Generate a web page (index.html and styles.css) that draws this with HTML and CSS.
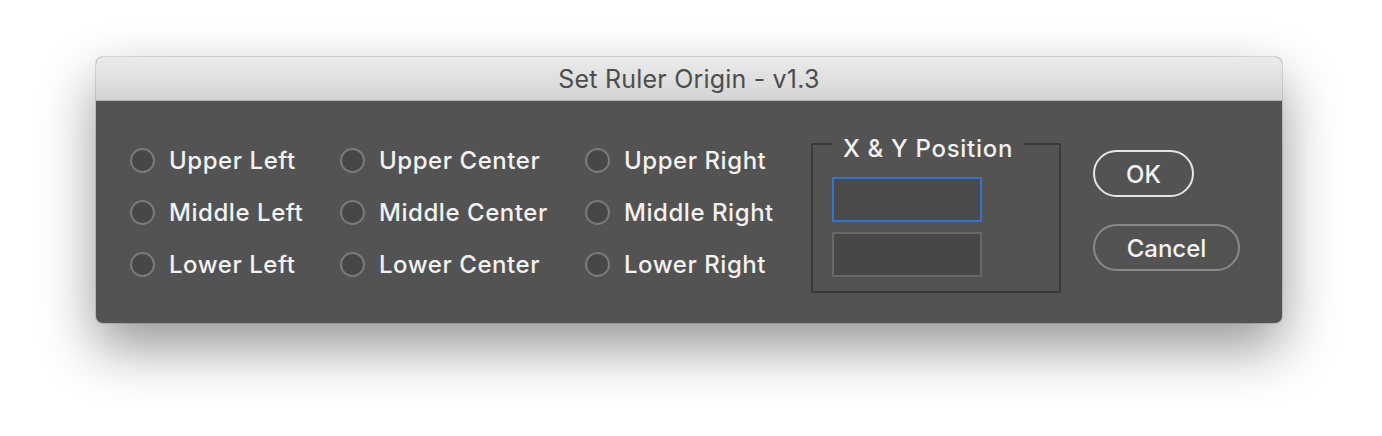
FILE: index.html
```html
<!DOCTYPE html>
<html>
<head>
<meta charset="utf-8">
<link rel="stylesheet" href="styles.css">
</head>
<body>
<div class="window">
  <div class="titlebar">Set Ruler Origin - v1.3</div>
  <div class="content">
    <div class="radios">
      <label class="radio"><span class="dot"></span>Upper Left</label>
      <label class="radio"><span class="dot"></span>Upper Center</label>
      <label class="radio"><span class="dot"></span>Upper Right</label>
      <label class="radio"><span class="dot"></span>Middle Left</label>
      <label class="radio"><span class="dot"></span>Middle Center</label>
      <label class="radio"><span class="dot"></span>Middle Right</label>
      <label class="radio"><span class="dot"></span>Lower Left</label>
      <label class="radio"><span class="dot"></span>Lower Center</label>
      <label class="radio"><span class="dot"></span>Lower Right</label>
    </div>
    <fieldset class="group">
      <legend class="group-title">X &amp; Y Position</legend>
      <div class="field focused"></div>
      <div class="field"></div>
    </fieldset>
    <div class="buttons">
      <div class="btn ok">OK</div>
      <div class="btn cancel">Cancel</div>
    </div>
  </div>
</div>
</body>
</html>
```

FILE: styles.css
```css
html, body {
  margin: 0;
  padding: 0;
  background: #ffffff;
}
body {
  width: 1382px;
  height: 436px;
  overflow: hidden;
  font-family: Inter, "Liberation Sans", sans-serif;
}
.window {
  margin: 57px 0 0 96px;
  width: 1186px;
  height: 266px;
  border-radius: 7px;
  overflow: hidden;
  background: #535353;
  box-shadow: 0 0 0 1px rgba(0,0,0,0.12), 0 24px 55px rgba(0,0,0,0.42);
  display: flex;
  flex-direction: column;
}
.titlebar {
  height: 43px;
  flex: none;
  background: linear-gradient(#ebebeb, #d5d5d5);
  border-bottom: 1px solid #b4b4b4;
  color: #4d4d4d;
  font-size: 25px;
  line-height: 45px;
  text-align: center;
  letter-spacing: 0.2px;
}
.content {
  flex: 1;
  display: flex;
  align-items: flex-start;
  padding: 33px 0 0 34px;
  color: #f2f2f2;
}
.radios {
  display: grid;
  grid-template-columns: 210px 245px 226px;
  grid-auto-rows: 52px;
}
.radio {
  display: flex;
  align-items: center;
  font-size: 24px;
  font-weight: 500;
  letter-spacing: 0.55px;
}
.dot {
  width: 21px;
  height: 21px;
  border: 2px solid #7a7a7a;
  border-radius: 50%;
  background: #474747;
  margin-right: 14px;
  flex: none;
}
.group {
  margin: -8px 0 0 0;
  width: 250px;
  height: 167px;
  box-sizing: border-box;
  border: 2px solid #3a3a3a;
  padding: 0 0 0 19px;
  min-inline-size: 0;
}
.group-title {
  margin-left: 0;
  padding: 10px 11px 0;
  font-size: 24px;
  font-weight: 500;
  line-height: 26px;
  letter-spacing: 0.7px;
  color: #f2f2f2;
}
.field {
  width: 150px;
  height: 45px;
  box-sizing: border-box;
  border: 2px solid #686868;
  background: #474747;
  margin-top: 10px;
}
.field.focused {
  border-color: #2f74d0;
  background: #4a4a4a;
  margin-top: 15px;
}
.buttons {
  margin-left: 32px;
  margin-top: 16px;
  display: flex;
  flex-direction: column;
  gap: 27px;
}
.btn {
  height: 47px;
  box-sizing: border-box;
  border-radius: 24px;
  font-size: 24px;
  font-weight: 500;
  line-height: 45px;
  text-align: center;
  color: #f2f2f2;
}
.ok {
  width: 101px;
  border: 2px solid #e6e6e6;
}
.cancel {
  width: 147px;
  border: 2px solid #8a8a8a;
}
```
